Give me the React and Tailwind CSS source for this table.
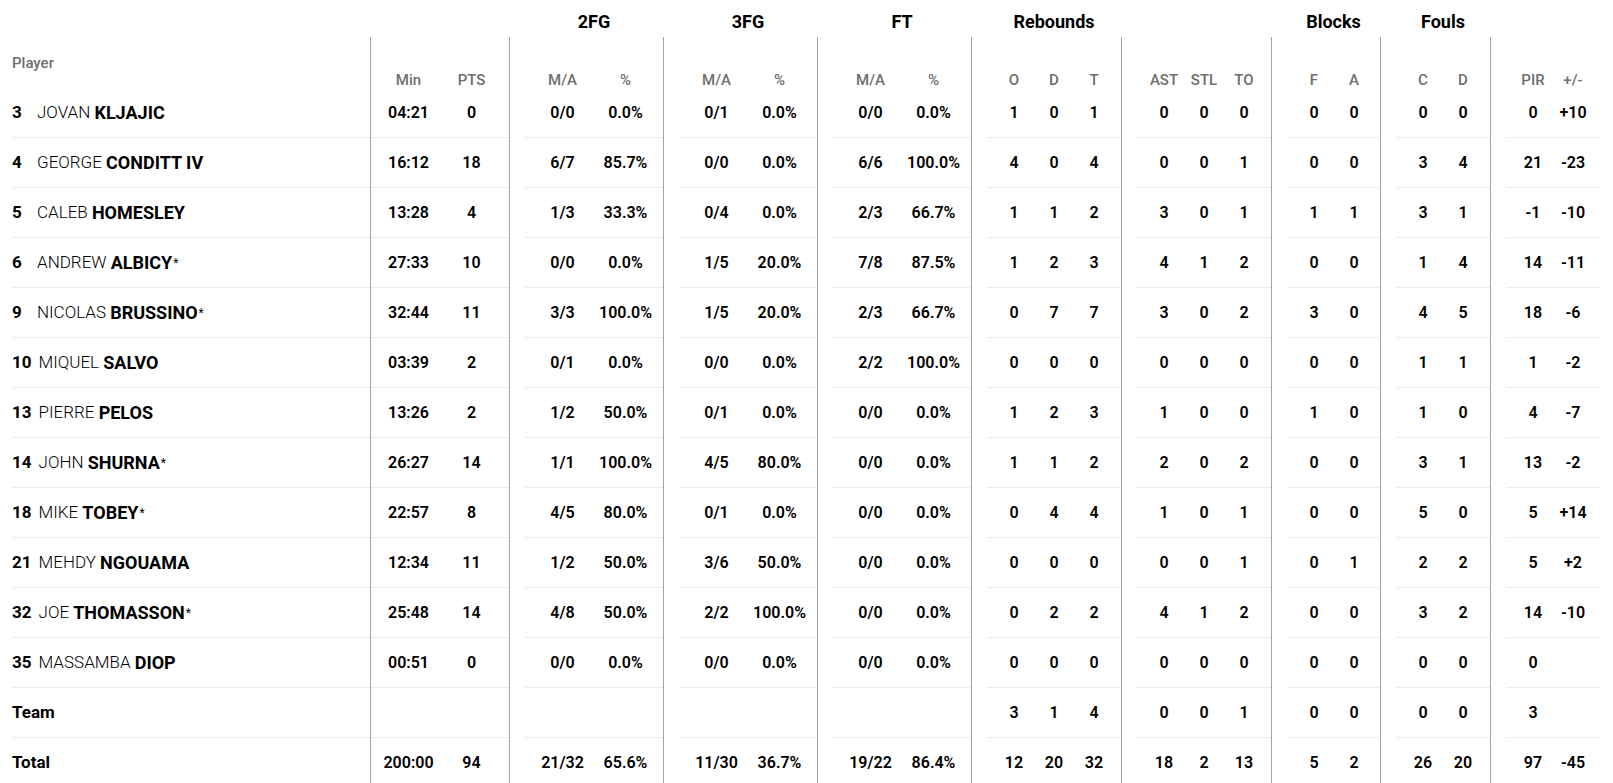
import React from "react";

const players = [
  { no: "3", first: "JOVAN", last: "KLJAJIC", stats: ["04:21", "0", "0/0", "0.0%", "0/1", "0.0%", "0/0", "0.0%", "1", "0", "1", "0", "0", "0", "0", "0", "0", "0", "0", "+10"] },
  { no: "4", first: "GEORGE", last: "CONDITT IV", stats: ["16:12", "18", "6/7", "85.7%", "0/0", "0.0%", "6/6", "100.0%", "4", "0", "4", "0", "0", "1", "0", "0", "3", "4", "21", "-23"] },
  { no: "5", first: "CALEB", last: "HOMESLEY", stats: ["13:28", "4", "1/3", "33.3%", "0/4", "0.0%", "2/3", "66.7%", "1", "1", "2", "3", "0", "1", "1", "1", "3", "1", "-1", "-10"] },
  { no: "6", first: "ANDREW", last: "ALBICY", star: true, stats: ["27:33", "10", "0/0", "0.0%", "1/5", "20.0%", "7/8", "87.5%", "1", "2", "3", "4", "1", "2", "0", "0", "1", "4", "14", "-11"] },
  { no: "9", first: "NICOLAS", last: "BRUSSINO", star: true, stats: ["32:44", "11", "3/3", "100.0%", "1/5", "20.0%", "2/3", "66.7%", "0", "7", "7", "3", "0", "2", "3", "0", "4", "5", "18", "-6"] },
  { no: "10", first: "MIQUEL", last: "SALVO", stats: ["03:39", "2", "0/1", "0.0%", "0/0", "0.0%", "2/2", "100.0%", "0", "0", "0", "0", "0", "0", "0", "0", "1", "1", "1", "-2"] },
  { no: "13", first: "PIERRE", last: "PELOS", stats: ["13:26", "2", "1/2", "50.0%", "0/1", "0.0%", "0/0", "0.0%", "1", "2", "3", "1", "0", "0", "1", "0", "1", "0", "4", "-7"] },
  { no: "14", first: "JOHN", last: "SHURNA", star: true, stats: ["26:27", "14", "1/1", "100.0%", "4/5", "80.0%", "0/0", "0.0%", "1", "1", "2", "2", "0", "2", "0", "0", "3", "1", "13", "-2"] },
  { no: "18", first: "MIKE", last: "TOBEY", star: true, stats: ["22:57", "8", "4/5", "80.0%", "0/1", "0.0%", "0/0", "0.0%", "0", "4", "4", "1", "0", "1", "0", "0", "5", "0", "5", "+14"] },
  { no: "21", first: "MEHDY", last: "NGOUAMA", stats: ["12:34", "11", "1/2", "50.0%", "3/6", "50.0%", "0/0", "0.0%", "0", "0", "0", "0", "0", "1", "0", "1", "2", "2", "5", "+2"] },
  { no: "32", first: "JOE", last: "THOMASSON", star: true, stats: ["25:48", "14", "4/8", "50.0%", "2/2", "100.0%", "0/0", "0.0%", "0", "2", "2", "4", "1", "2", "0", "0", "3", "2", "14", "-10"] },
  { no: "35", first: "MASSAMBA", last: "DIOP", stats: ["00:51", "0", "0/0", "0.0%", "0/0", "0.0%", "0/0", "0.0%", "0", "0", "0", "0", "0", "0", "0", "0", "0", "0", "0", ""] },
  { label: "Team", stats: ["", "", "", "", "", "", "", "", "3", "1", "4", "0", "0", "1", "0", "0", "0", "0", "3", ""] },
  { label: "Total", stats: ["200:00", "94", "21/32", "65.6%", "11/30", "36.7%", "19/22", "86.4%", "12", "20", "32", "18", "2", "13", "5", "2", "26", "20", "97", "-45"] },
];

// every group: title, sub labels, first stat index, and its spacing classes
const groups = [
  { title: "", labels: ["Min", "PTS"], start: 0, head: "pl-[1px]", pad: "", width: "w-[138px]", inner: "pl-[6px]", cell: "w-[63px]" },
  { title: "2FG", labels: ["M/A", "%"], start: 2, head: "pl-[16px]", pad: "pl-[15px]", width: "w-[138px]", inner: "pl-[6px]", cell: "w-[63px]" },
  { title: "3FG", labels: ["M/A", "%"], start: 4, head: "pl-[16px]", pad: "pl-[15px]", width: "w-[138px]", inner: "pl-[6px]", cell: "w-[63px]" },
  { title: "FT", labels: ["M/A", "%"], start: 6, head: "pl-[16px]", pad: "pl-[15px]", width: "w-[138px]", inner: "pl-[6px]", cell: "w-[63px]" },
  { title: "Rebounds", labels: ["O", "D", "T"], start: 8, head: "pl-[16px]", pad: "pl-[15px]", width: "w-[134px]", inner: "pl-[7px]", cell: "w-[40px]" },
  { title: "", labels: ["AST", "STL", "TO"], start: 11, head: "pl-[16px]", pad: "pl-[15px]", width: "w-[134px]", inner: "pl-[7px]", cell: "w-[40px]" },
  { title: "Blocks", labels: ["F", "A"], start: 14, head: "pl-[16px]", pad: "pl-[15px]", width: "w-[93px]", inner: "pl-[7px]", cell: "w-[40px]" },
  { title: "Fouls", labels: ["C", "D"], start: 16, head: "pl-[16px]", pad: "pl-[15px]", width: "w-[94px]", inner: "pl-[7px]", cell: "w-[40px]" },
  { title: "", labels: ["PIR", "+/-"], start: 18, head: "pl-[16px]", pad: "pl-[15px]", width: "w-[94px]", inner: "pl-[7px]", cell: "w-[40px]" },
];

const PlayerColumn = () => (
  <div className="w-[358px] shrink-0">
    <div className="h-[88px] pt-[53px] text-[15px] leading-[20px] font-medium text-[#6e6e6e]">Player</div>
    {players.map((p, i) => (
      <div key={i} className="flex h-[50px] items-center border-b border-[#ececec] text-[17px] text-black">
        {p.label ? (
          <span className="font-bold">{p.label}</span>
        ) : (
          <>
            <span className="inline-block min-w-[25px] pr-[7px] font-bold">{p.no}</span>
            <span className="font-light">{p.first}&nbsp;</span>
            <span className="text-[18px] font-bold">{p.last}</span>
            {p.star && <span className="ml-[1px] align-[-5px] text-[12px]">*</span>}
          </>
        )}
      </div>
    ))}
  </div>
);

const Group = ({ g }) => (
  <div className="flex shrink-0 flex-col">
    <div className={`h-[37px] pt-[6px] ${g.head} flex items-center justify-center text-[18px] font-bold text-black`}>
      {g.title}
    </div>
    <div className={`flex-1 border-l border-[#a3a3a3] ${g.pad}`}>
      <div className={g.width}>
        <div className={`flex h-[51px] pt-[33px] ${g.inner} text-[15px] font-medium leading-[20px] text-[#6e6e6e]`}>
          {g.labels.map((l) => (
            <div key={l} className={`${g.cell} text-center`}>
              {l}
            </div>
          ))}
        </div>
        {players.map((p, i) => (
          <div key={i} className={`flex h-[50px] items-center border-b border-[#ececec] ${g.inner} text-[16px] font-semibold text-black`}>
            {g.labels.map((_, j) => (
              <div key={j} className={`${g.cell} text-center`}>
                {p.stats[g.start + j]}
              </div>
            ))}
          </div>
        ))}
      </div>
    </div>
  </div>
);

export default function App() {
  return (
    <div className="min-h-screen bg-white pl-[12px] font-['Roboto','Liberation_Sans',sans-serif]">
      <div className="flex">
        <PlayerColumn />
        {groups.map((g, i) => (
          <Group key={i} g={g} />
        ))}
      </div>
    </div>
  );
}
